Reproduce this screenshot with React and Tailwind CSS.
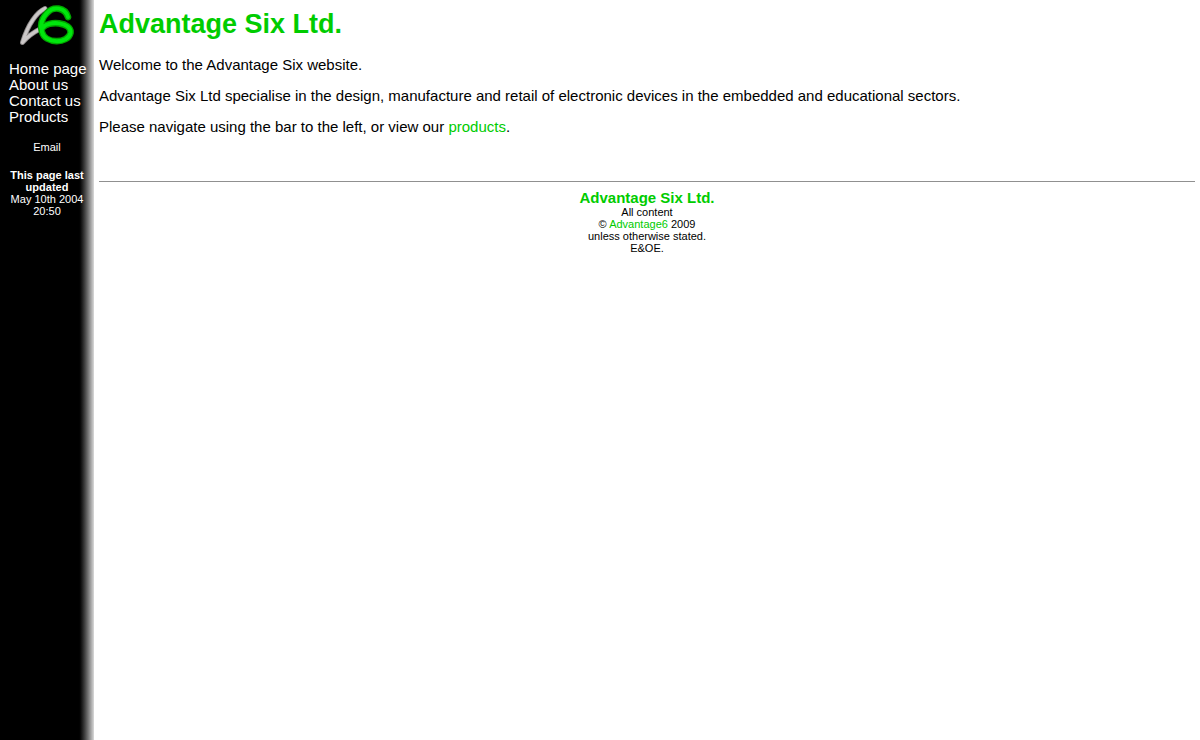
const navLinks = ["Home page", "About us", "Contact us", "Products"];

function Logo() {
  return (
    <svg viewBox="0 0 70 50" className="h-[50px] w-[70px]" role="img" aria-label="A6">
      <defs>
        <filter id="soft" x="-10%" y="-10%" width="120%" height="120%">
          <feGaussianBlur stdDeviation="0.5" />
        </filter>
      </defs>
      <g fill="none" strokeLinecap="round" strokeLinejoin="round" filter="url(#soft)">
        <path d="M31 8.5C23 12 14 24 8.500 42.500C13 37 18 33 27 28.500" stroke="#8c8888" strokeWidth="5" />
        <path d="M31 8.5C23 12 14 24 8.500 42.500C13 37 18 33 27 28.500" stroke="#cbc7c7" strokeWidth="3.2" />
        <path d="M54 17C51 7 39 6 33 13C28 18 26 25 28 32C31 44 54 44 56.500 33C58 22 34 20 28.500 28" stroke="#00a400" strokeWidth="6.6" />
        <path d="M54 17C51 7 39 6 33 13C28 18 26 25 28 32C31 44 54 44 56.500 33C58 22 34 20 28.500 28" stroke="#00e60a" strokeWidth="4" />
      </g>
    </svg>
  );
}

export default function App() {
  return (
    <div className="flex min-h-screen bg-white font-['Liberation_Sans',Arial,sans-serif] text-[15px] leading-4 text-black">
      <aside className="flex w-[94px] shrink-0 flex-col items-start bg-linear-to-r from-black from-[78px] to-white to-[96px] text-white">
        <a href="#home" className="ml-[14px]">
          <Logo />
        </a>
        <nav className="mt-[11px] ml-[9px] flex flex-col whitespace-nowrap">
          {navLinks.map((label) => (
            <a key={label} href="#">{label}</a>
          ))}
        </nav>
        <div className="ml-[9px] w-[76px] text-center text-[11px] leading-3">
          <a href="#email" className="mt-4 block">Email</a>
          <p className="mt-4">
            <b>This page last updated</b>
            <br />
            May 10th 2004 20:50
          </p>
        </div>
      </aside>
      <main className="min-w-0 flex-1 px-[5px] pt-2">
        <h1 className="text-[27px] leading-8 font-bold text-[#00cc00]">Advantage Six Ltd.</h1>
        <div className="mt-4 flex flex-col gap-[14px] leading-[17px]">
          <p>Welcome to the Advantage Six website.</p>
          <p>
            Advantage Six Ltd specialise in the design, manufacture and retail of electronic devices
            in the embedded and educational sectors.
          </p>
          <p>
            Please navigate using the bar to the left, or view our{" "}
            <a href="#products" className="text-[#00cc00]">products</a>.
          </p>
        </div>
        <hr className="mt-[46px] border-t border-[#909090]" />
        <footer className="mt-2 text-center text-[11px] leading-3">
          <p className="text-[15px] leading-4 font-bold text-[#00cc00]">Advantage Six Ltd.</p>
          <p>All content</p>
          <p>© <a href="#advantage6" className="text-[#00cc00]">Advantage6</a> 2009</p>
          <p>unless otherwise stated.</p>
          <p>E&amp;OE.</p>
        </footer>
      </main>
    </div>
  );
}
